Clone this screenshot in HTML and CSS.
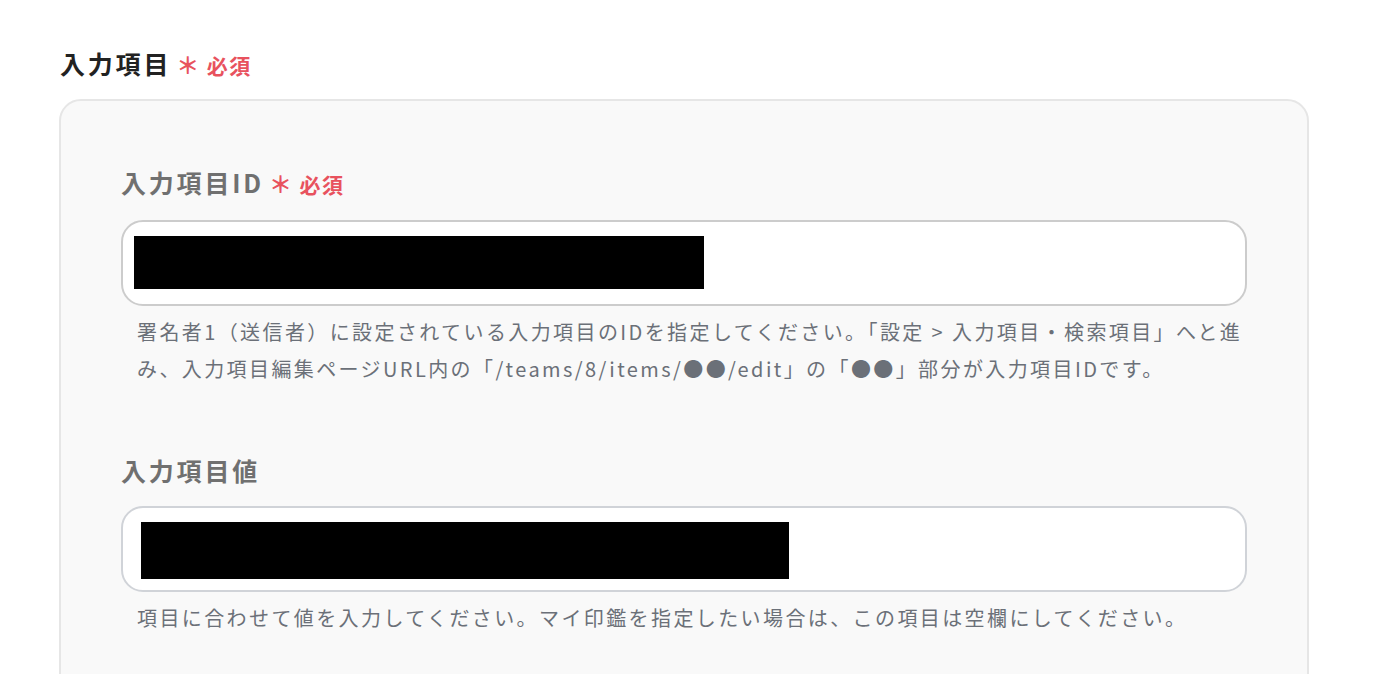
FILE: index.html
```html
<!DOCTYPE html>
<html lang="ja">

<head>
    <meta charset="utf-8">
    <title>入力項目</title>
    <link rel="stylesheet" href="styles.css">
</head>

<body>
    <div class="page">
        <h2 class="section-title">入力項目<span class="required"><span class="mark">＊</span>必須</span></h2>
        <div class="field-card">
            <div class="field">
                <label class="field-label">入力項目ID<span class="required"><span class="mark">＊</span>必須</span></label>
                <div class="field-input">
                    <span class="redacted redacted-id"></span>
                </div>
                <p class="field-help">署名者1（送信者）に設定されている入力項目のIDを指定してください。「設定 &gt; 入力項目・検索項目」へと進み、入力項目編集ページURL内の「/teams/8/items/●●/edit」の「●●」部分が入力項目IDです。</p>
            </div>
            <div class="field">
                <label class="field-label">入力項目値</label>
                <div class="field-input field-input-value">
                    <span class="redacted redacted-value"></span>
                </div>
                <p class="field-help">項目に合わせて値を入力してください。マイ印鑑を指定したい場合は、この項目は空欄にしてください。</p>
            </div>
        </div>
    </div>
</body>

</html>
```

FILE: styles.css
```css
html, body{
    margin: 0;
    padding: 0;
    background: #fff;
    overflow: hidden;
}
body{
    font-family: "Noto Sans CJK JP", "Noto Sans", sans-serif;
}
.page{
    padding: 44px 69px 0 59px;
}
.section-title{
    margin: 0 0 15px 1px;
    font-size: 25px;
    line-height: 38px;
    letter-spacing: 2.8px;
    font-weight: 700;
    color: #222;
}
.required{
    margin-left: 5px;
    font-size: 21px;
    letter-spacing: 1.5px;
    font-weight: 700;
    color: #e8525e;
}
.required .mark{
    display: inline-block;
    margin-right: 6px;
    font-size: 23px;
    font-weight: 700;
}
.field-card{
    background: #f9f9f9;
    border: 2px solid #e6e6e6;
    border-radius: 22px;
    padding: 62px 60px 120px 60px;
}
.field{
    display: flex;
    flex-direction: column;
}
.field + .field{
    margin-top: 64px;
}
.field-label{
    display: block;
    margin: 0 0 17px 0;
    font-size: 25px;
    line-height: 38px;
    letter-spacing: 2.8px;
    font-weight: 700;
    color: #707070;
}
.field-input{
    display: flex;
    align-items: center;
    height: 82px;
    padding: 0 11px;
    background: #fff;
    border: 2px solid #cccccc;
    border-radius: 22px;
}
.field-input-value{
    padding: 0 18px;
    border-color: #d0d3d8;
}
.redacted{
    display: block;
    background: #000;
}
.redacted-id{
    width: 570px;
    height: 53px;
    margin-top: -1px;
}
.redacted-value{
    width: 648px;
    height: 57px;
    margin-top: 2px;
}
.field-help{
    margin: 7px 0 0 0;
    padding: 0 0 0 16px;
    font-size: 20px;
    line-height: 37px;
    letter-spacing: 2.4px;
    color: #6b7078;
}
```
